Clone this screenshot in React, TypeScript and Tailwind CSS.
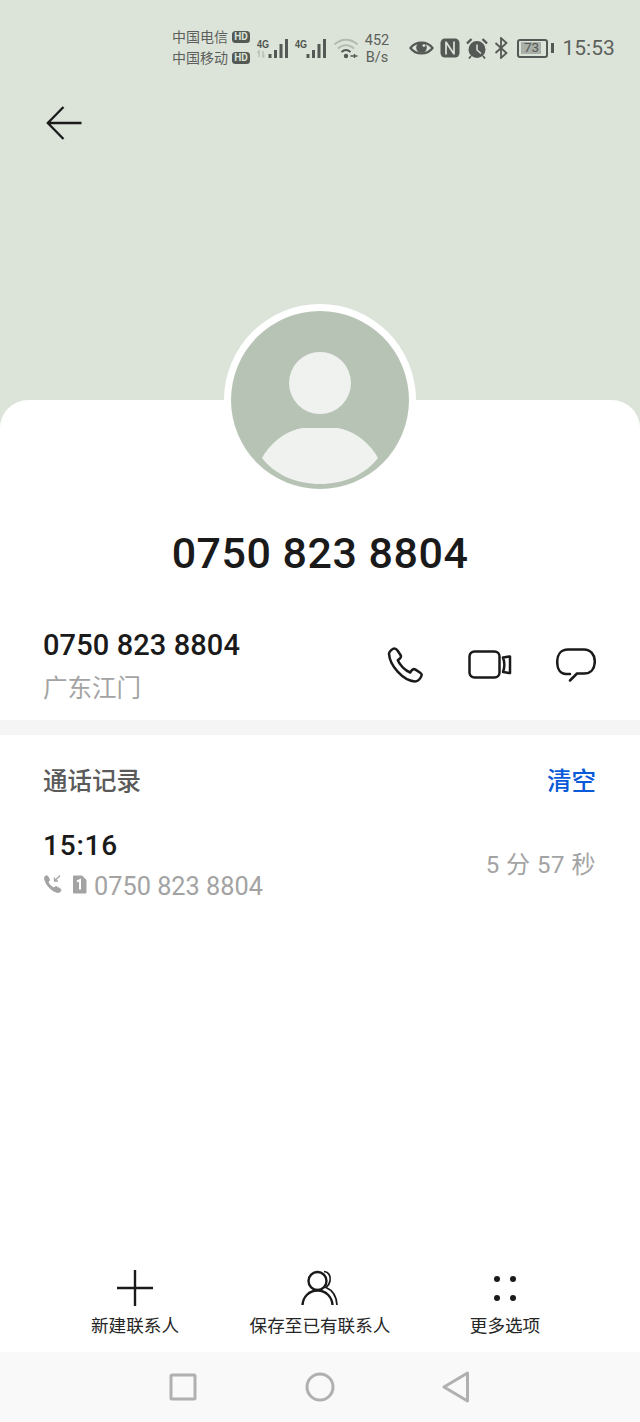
import React from "react";

const font = { fontFamily: '"Roboto","Noto Sans CJK SC",sans-serif' };

function Signal({ small = false }: { small?: boolean }) {
  return (
    <svg width="32" height="20" viewBox="0 0 32 20" className="shrink-0">
      <text x="0" y="10" fontSize="11" fontWeight="700" fill="#4e524e" fontFamily="Liberation Sans, sans-serif" textLength="12" lengthAdjust="spacingAndGlyphs">4G</text>
      {small && (
        <path d="M2 19v-6l-1.500 1.500M6 13v6l1.500-1.500" stroke="#b4bbb3" strokeWidth="1.300" fill="none" />
      )}
      <rect x="11.500" y="16" width="3" height="4" fill="#555955" />
      <rect x="17" y="12" width="3" height="8" fill="#555955" />
      <rect x="22.500" y="6" width="3" height="14" fill="#555955" />
      <rect x="28" y="1" width="3" height="19" fill="#555955" />
    </svg>
  );
}

function HD() {
  return (
    <span className="ml-[4px] flex h-[12px] w-[18px] items-center justify-center rounded-[3.5px] bg-[#555955] text-[10px] leading-none font-bold text-[#dce4d9]">
      HD
    </span>
  );
}

function StatusBar() {
  return (
    <div className="flex h-[46px] items-center pl-[172px] text-[#5c605c]">
      <div className="-mt-[2px] flex w-[85px] flex-col gap-[3px] text-[14px] leading-[18px]">
        <div className="flex items-center">中国电信<HD /></div>
        <div className="flex items-center">中国移动<HD /></div>
      </div>
      <div className="ml-0 flex items-center gap-[6px]">
        <Signal small />
        <Signal />
      </div>
      <svg width="26" height="24" viewBox="0 0 26 24" className="ml-[6px] shrink-0" fill="none">
        <path d="M1.500 8.500C8 2 18 2 24.500 8.500" stroke="#b2b9b0" strokeWidth="2" />
        <path d="M5 12.500C10 8 16 8 21 12.500" stroke="#b2b9b0" strokeWidth="2" />
        <path d="M8.500 16C11.500 13.400 14.500 13.400 17.500 16" stroke="#555955" strokeWidth="2" />
        <circle cx="13" cy="20" r="2.200" fill="#555955" />
        <path d="M17.500 20h7M21.500 18v4" stroke="#555955" strokeWidth="1.400" />
      </svg>
      <div className="mt-[2px] ml-[1px] flex w-[34px] flex-col items-center text-[14.500px] leading-[17px]">
        <span>452</span>
        <span>B/s</span>
      </div>
      <svg width="25" height="18" viewBox="0 0 26 18" className="ml-[15px] shrink-0" fill="none">
        <path d="M1.500 9C7 1.500 19 1.500 24.500 9C19 16.500 7 16.500 1.500 9Z" stroke="#555955" strokeWidth="2.200" />
        <circle cx="13" cy="8.500" r="5.500" fill="#555955" />
        <circle cx="15.500" cy="6.500" r="1.500" fill="#dce4d9" />
      </svg>
      <svg width="20" height="20" viewBox="0 0 20 20" className="ml-[6px] shrink-0">
        <rect x="0.500" y="0.500" width="19" height="19" rx="4.500" fill="#555955" />
        <path d="M6 3.500V16.500M14 3.500V16.500M6 4L14 16" stroke="#dce4d9" strokeWidth="1.700" fill="none" />
      </svg>
      <svg width="22" height="21" viewBox="0 0 22 21" className="ml-[6px] shrink-0">
        <circle cx="11" cy="11.500" r="8.500" fill="#555955" />
        <path d="M11 6.500v5.500l4 3.500" stroke="#dce4d9" strokeWidth="1.500" fill="none" />
        <path d="M1 5.500l4.500-4.500M21 5.500l-4.500-4.500" stroke="#555955" strokeWidth="2.400" />
        <path d="M5 18l-2 2.500M17 18l2 2.500" stroke="#555955" strokeWidth="1.800" />
      </svg>
      <svg width="14" height="22" viewBox="0 0 14 22" className="ml-[6px] shrink-0" fill="none">
        <path d="M1.500 6L12.500 16L7 21V1L12.500 6L1.500 16" stroke="#555955" strokeWidth="1.800" />
      </svg>
      <div className="ml-[9px] flex items-center">
        <div className="flex h-[19px] w-[31px] items-center rounded-[3px] border-[2px] border-[#555955] p-[1.500px]">
          <div className="flex h-full w-[84%] items-center justify-center bg-[#aab0a8] text-[13.500px] leading-none text-[#555955]">
            <span className="ml-[2px]">73</span>
          </div>
        </div>
        <div className="ml-[3px] h-[10px] w-[2.500px] bg-[#555955]" />
      </div>
      <span className="ml-[9px] text-[21px] leading-none">15:53</span>
    </div>
  );
}

function BackArrow() {
  return (
    <svg width="36" height="34" viewBox="0 0 36 34" fill="none" stroke="#1a1a1a" strokeWidth="2.300">
      <path d="M35.500 17H2M17.500 1L1.800 17L17.500 33" />
    </svg>
  );
}

function Avatar() {
  return (
    <div className="relative z-10 mx-auto -mt-[96px] h-[192px] w-[192px] rounded-full bg-white p-[7px]">
      <svg width="178" height="178" viewBox="0 0 178 178" className="block">
        <circle cx="89" cy="89" r="89" fill="#b7c4b5" />
        <circle cx="89" cy="72" r="31" fill="#f0f2ef" />
        <path d="M31 147C42 127 62 117 74 117H104C116 117 136 127 147 147C134 164 112 173 89 173C66 173 44 164 31 147Z" fill="#f0f2ef" />
      </svg>
    </div>
  );
}

function ContactRow() {
  return (
    <div className="mt-[47px] flex h-[93px] items-start justify-between pr-[44px] pl-[43px]">
      <div className="flex flex-col">
        <span className="-mt-[1px] mb-[1px] text-[29px] leading-[38px] font-medium tracking-[0.1px] text-[#1a1a1a]">0750 823 8804</span>
        <span className="mt-[7px] text-[24.500px] leading-[34px] text-[#a3a3a3]">广东江门</span>
      </div>
      <div className="mt-[20px] flex items-center">
        <svg width="36" height="36" viewBox="0 0 36 36" fill="none" stroke="#1a1a1a" strokeWidth="2.500" strokeLinejoin="round" className="ml-[1px]">
          <path d="M2 6.500C2.500 4 5.500 1.500 7.500 1.500C9 1.500 9.800 2.500 10.500 3.500L13.500 8C14.300 9.300 14 10.500 12.900 11.500L10.800 13.300C12.600 17.800 18 23.500 23.200 25.500L24.800 23.300C25.800 22 27.200 21.800 28.500 22.600L33.200 25.700C34.600 26.600 35 28 34.200 29.500C33 32 30.500 34.500 27.800 34.500C16 33.500 2.500 18.500 2 6.500Z" />
        </svg>
        <svg width="44" height="30" viewBox="0 0 44 30" fill="none" stroke="#1a1a1a" strokeWidth="2.500" strokeLinejoin="round" className="ml-[45px]">
          <rect x="1.500" y="1.500" width="30" height="26" rx="5" />
          <path d="M35 7.500C38 7.500 41.500 6 42 6.500V23C41.500 23.500 38 22 35 22C36.500 18 36.500 11.500 35 7.500Z" />
        </svg>
        <svg width="40" height="34" viewBox="0 0 40 34" fill="none" stroke="#1a1a1a" strokeWidth="2.500" strokeLinecap="round" strokeLinejoin="round" className="ml-[44px]">
          <path d="M14 26H10C4.500 26 1.200 21.500 1.200 14C1.200 6.500 5 1.500 12 1.500H28C34.500 1.500 38.800 6.500 38.800 13.500C38.800 21 34.500 25.500 28 25.500H21L14 32.500" />
        </svg>
      </div>
    </div>
  );
}

function CallLog() {
  return (
    <div className="flex flex-col pr-[44px] pl-[43px]">
      <div className="mt-[30px] flex items-center justify-between">
        <span className="text-[24.500px] leading-[34px] font-medium text-[#5a5a5a]">通话记录</span>
        <span className="text-[24.500px] leading-[34px] font-medium text-[#0a59d8]">清空</span>
      </div>
      <div className="mt-[28px] flex items-center justify-between">
        <div className="flex flex-col">
          <span className="text-[28px] leading-[38px] font-medium tracking-[0.8px] text-[#1a1a1a]">15:16</span>
          <div className="mt-[7px] flex h-[30px] items-center">
            <svg width="20" height="20" viewBox="0 0 20 20" fill="none" stroke="#a3a3a3" className="-mt-[6px]">
              <path d="M1.500 3.500C2 2 3.500 1.500 4.500 2L6.500 5.500C6.800 6.500 5.500 7.500 5 8C6 10.500 8.500 13 11 14L13 12.500L17.500 15C18.500 16 17.500 18 15.500 18.500C9 18 2 10.500 1.500 3.500Z" fill="#a3a3a3" strokeWidth="1" />
              <path d="M17 1.500L11.500 7M11.500 3.500V7H15" strokeWidth="1.300" />
            </svg>
            <svg width="15" height="19" viewBox="0 0 15 19" className="ml-[9px] -mt-[6px]">
              <path d="M1 1.500A1 1 0 0 1 2 .5H10L14.500 5V17.500A1 1 0 0 1 13.500 18.500H2A1 1 0 0 1 1 17.500Z" fill="#a3a3a3" />
              <path d="M5 6.500L8 5V14.500" stroke="#fff" strokeWidth="2" fill="none" />
            </svg>
            <span className="ml-[7px] text-[25.300px] leading-[30px] text-[#a3a3a3]">0750 823 8804</span>
          </div>
        </div>
        <span className="text-[24px] leading-[34px] tracking-[0.5px] text-[#a3a3a3]">5 分 57 秒</span>
      </div>
    </div>
  );
}

function BottomActions() {
  return (
    <div className="grid grid-cols-3 px-[42.500px] text-[17.600px] leading-[24px] text-[#262626]">
      <div className="flex flex-col items-center">
        <svg width="36" height="36" viewBox="0 0 36 36" stroke="#1a1a1a" strokeWidth="2.400">
          <path d="M18 0V36M0 18H36" />
        </svg>
        <span className="mt-[8px]">新建联系人</span>
      </div>
      <div className="flex flex-col items-center">
        <svg width="38" height="36" viewBox="0 0 38 36" fill="none" stroke="#1a1a1a" strokeWidth="2.400">
          <circle cx="16.500" cy="11" r="9" />
          <path d="M1.500 35C2 27 8 20.500 16.500 20.500C25 20.500 31 27 31.500 35" />
          <path d="M23 1.500C28 2 30 6.500 29 11C28.500 14 27 16 25 17.500C31 20 35.500 26 36 35" strokeWidth="1.700" />
        </svg>
        <span className="mt-[8px] whitespace-nowrap">保存至已有联系人</span>
      </div>
      <div className="flex flex-col items-center">
        <div className="grid h-[36px] w-[36px] grid-cols-2 content-center justify-items-center gap-y-[13px] px-[2px]">
          <div className="h-[6px] w-[6px] rounded-full bg-[#1a1a1a]" />
          <div className="h-[6px] w-[6px] rounded-full bg-[#1a1a1a]" />
          <div className="h-[6px] w-[6px] rounded-full bg-[#1a1a1a]" />
          <div className="h-[6px] w-[6px] rounded-full bg-[#1a1a1a]" />
        </div>
        <span className="mt-[8px]">更多选项</span>
      </div>
    </div>
  );
}

function NavBar() {
  return (
    <div className="mt-[14px] flex h-[70px] items-center justify-center bg-[#f9f9f9]">
      <svg width="28" height="28" viewBox="0 0 28 28" fill="none" stroke="#b0b0b0" strokeWidth="3" strokeLinejoin="round" className="-ml-[2px]">
        <rect x="2" y="2" width="24" height="24" rx="1" />
      </svg>
      <svg width="30" height="30" viewBox="0 0 30 30" fill="none" stroke="#b0b0b0" strokeWidth="3" className="ml-[108px]">
        <circle cx="15" cy="15" r="13" />
      </svg>
      <svg width="28" height="32" viewBox="0 0 28 32" fill="none" stroke="#b0b0b0" strokeWidth="3" strokeLinejoin="round" className="ml-[107px]">
        <path d="M25.500 2L2 16L25.500 30Z" />
      </svg>
    </div>
  );
}

export default function App() {
  return (
    <div className="flex h-[1422px] w-[640px] flex-col overflow-hidden bg-[#dce4d9]" style={font}>
      <div className="h-[428px] shrink-0 pt-[25px]">
        <StatusBar />
        <div className="mt-[35px] ml-[46px]">
          <BackArrow />
        </div>
      </div>
      <div className="-mt-[28px] flex flex-1 flex-col rounded-t-[28px] bg-white">
        <Avatar />
        <div className="mt-[30px] text-center text-[43px] leading-[54px] font-medium tracking-[0.5px] text-[#1a1a1a]">0750 823 8804</div>
        <ContactRow />
        <div className="h-[15px] shrink-0 bg-[#f5f5f5]" />
        <CallLog />
        <div className="flex-1" />
        <BottomActions />
        <NavBar />
      </div>
    </div>
  );
}
